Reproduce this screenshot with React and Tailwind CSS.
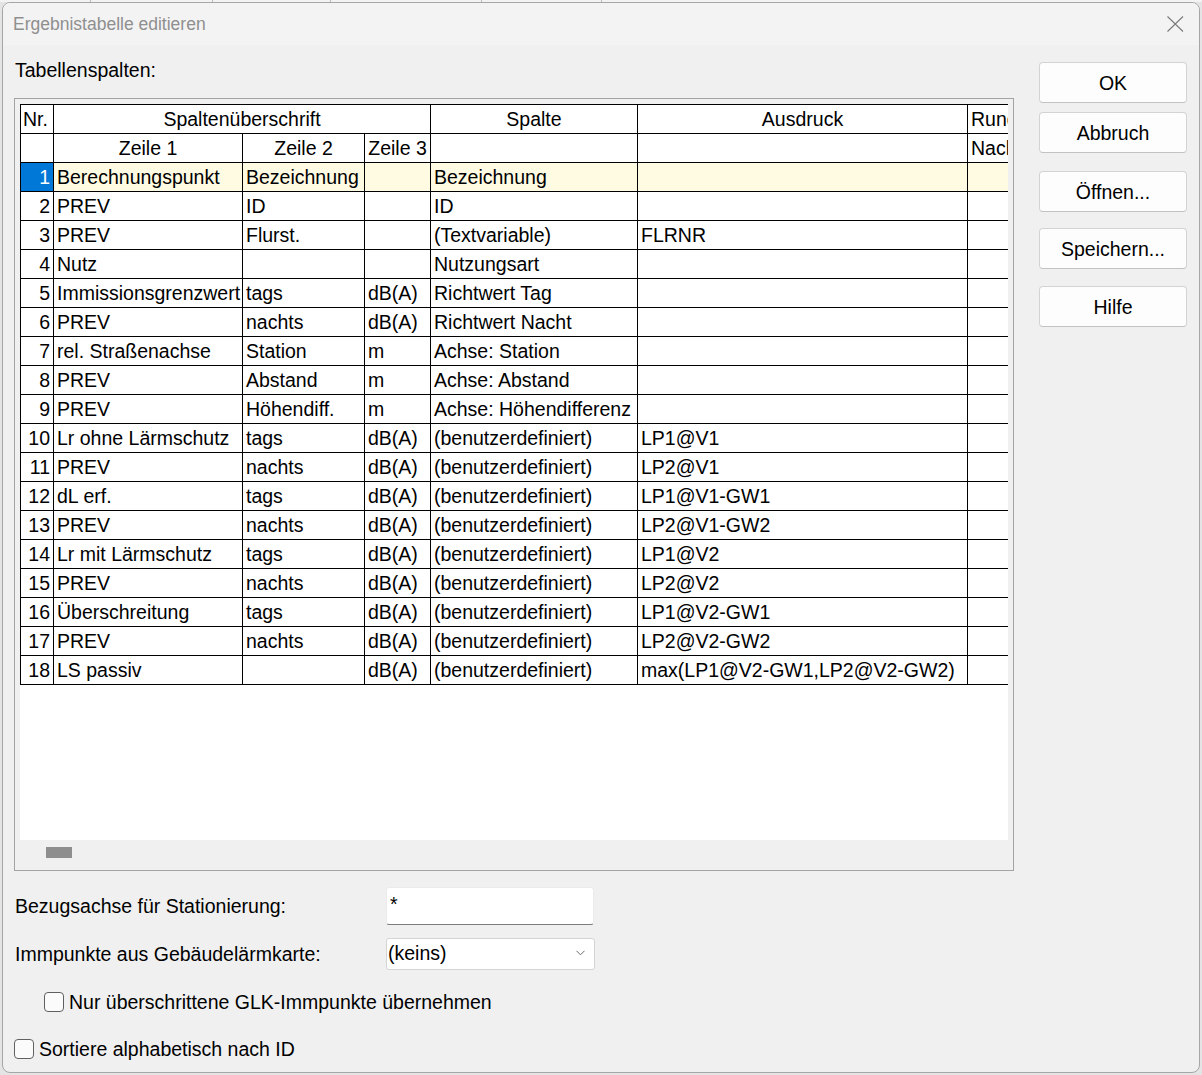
import React from "react";

// column widths incl. right grid line (first column also carries the left line)
const W = {
    nr: "w-[34px]",
    z1: "w-[189px]",
    z2: "w-[122px]",
    z3: "w-[66px]",
    head: "w-[377px]",
    spalte: "w-[207px]",
    ausdruck: "w-[330px]",
    rund: "w-[120px]",
};

const rows = [
    ["Berechnungspunkt", "Bezeichnung", "", "Bezeichnung", ""],
    ["PREV", "ID", "", "ID", ""],
    ["PREV", "Flurst.", "", "(Textvariable)", "FLRNR"],
    ["Nutz", "", "", "Nutzungsart", ""],
    ["Immissionsgrenzwert", "tags", "dB(A)", "Richtwert Tag", ""],
    ["PREV", "nachts", "dB(A)", "Richtwert Nacht", ""],
    ["rel. Straßenachse", "Station", "m", "Achse: Station", ""],
    ["PREV", "Abstand", "m", "Achse: Abstand", ""],
    ["PREV", "Höhendiff.", "m", "Achse: Höhendifferenz", ""],
    ["Lr ohne Lärmschutz", "tags", "dB(A)", "(benutzerdefiniert)", "LP1@V1"],
    ["PREV", "nachts", "dB(A)", "(benutzerdefiniert)", "LP2@V1"],
    ["dL erf.", "tags", "dB(A)", "(benutzerdefiniert)", "LP1@V1-GW1"],
    ["PREV", "nachts", "dB(A)", "(benutzerdefiniert)", "LP2@V1-GW2"],
    ["Lr mit Lärmschutz", "tags", "dB(A)", "(benutzerdefiniert)", "LP1@V2"],
    ["PREV", "nachts", "dB(A)", "(benutzerdefiniert)", "LP2@V2"],
    ["Überschreitung", "tags", "dB(A)", "(benutzerdefiniert)", "LP1@V2-GW1"],
    ["PREV", "nachts", "dB(A)", "(benutzerdefiniert)", "LP2@V2-GW2"],
    ["LS passiv", "", "dB(A)", "(benutzerdefiniert)", "max(LP1@V2-GW1,LP2@V2-GW2)"],
];

function Cell({ w, className = "", children }) {
    return (
        <div
            className={`${w} flex h-full shrink-0 items-center overflow-hidden whitespace-nowrap border-r border-b border-black px-[3px] ${className}`}
        >
            {children}
        </div>
    );
}

// long header in the last column: breaks inside the cell, only first line shows
function Clipped({ children }) {
    return <span className="block h-[22px] overflow-hidden whitespace-normal break-all">{children}</span>;
}

function Grid() {
    return (
        <div className="h-[736px] w-[988px] overflow-hidden bg-white">
            <div className="w-max">
                <div className="flex h-[30px] border-t border-black">
                    <Cell w={W.nr} className="border-l pl-[2px]">Nr.</Cell>
                    <Cell w={W.head} className="justify-center">Spaltenüberschrift</Cell>
                    <Cell w={W.spalte} className="justify-center">Spalte</Cell>
                    <Cell w={W.ausdruck} className="justify-center">Ausdruck</Cell>
                    <Cell w={W.rund}>Rundung</Cell>
                </div>
                <div className="flex h-[29px]">
                    <Cell w={W.nr} className="border-l" />
                    <Cell w={W.z1} className="justify-center">Zeile 1</Cell>
                    <Cell w={W.z2} className="justify-center">Zeile 2</Cell>
                    <Cell w={W.z3} className="justify-center">Zeile 3</Cell>
                    <Cell w={W.spalte} />
                    <Cell w={W.ausdruck} />
                    <Cell w={W.rund}><Clipped>Nachkommastellen</Clipped></Cell>
                </div>
                {rows.map((r, i) => {
                    const sel = i === 0;
                    const bg = sel ? "bg-[#fffbe3]" : "";
                    return (
                        <div key={i} className="flex h-[29px]">
                            <Cell
                                w={W.nr}
                                className={`justify-end border-l pr-[3px] ${sel ? "bg-[#0078d7] text-white" : ""}`}
                            >
                                {i + 1}
                            </Cell>
                            <Cell w={W.z1} className={bg}>{r[0]}</Cell>
                            <Cell w={W.z2} className={bg}>{r[1]}</Cell>
                            <Cell w={W.z3} className={bg}>{r[2]}</Cell>
                            <Cell w={W.spalte} className={bg}>{r[3]}</Cell>
                            <Cell w={W.ausdruck} className={bg}>{r[4]}</Cell>
                            <Cell w={W.rund} className={bg} />
                        </div>
                    );
                })}
            </div>
        </div>
    );
}

function Button({ children, className = "" }) {
    return (
        <button
            className={`flex h-[41px] w-[148px] items-center justify-center rounded-[4px] border border-[#d3d3d3] border-b-[#c2c2c2] bg-[#fdfdfd] text-black ${className}`}
        >
            {children}
        </button>
    );
}

function Checkbox() {
    return <span className="h-[20px] w-[20px] shrink-0 rounded-[4px] border border-[#606060] bg-[#fbfbfb]" />;
}

export default function App() {
    return (
        <div className="h-[1075px] w-[1202px] overflow-hidden bg-[#e4e4e4] font-['Liberation_Sans',Arial,sans-serif] text-[19.5px] leading-[22px] text-black">
            {/* menu bar of the window behind the dialog */}
            <div className="flex h-[2px] bg-[#f3f3f3]">
                <span className="w-[91px] border-r border-[#bbb]" />
                <span className="w-[122px] border-r border-[#bbb]" />
                <span className="w-[118px] border-r border-[#bbb]" />
                <span className="w-[151px] border-r border-[#bbb]" />
                <span className="w-[120px] border-r border-[#bbb]" />
            </div>

            <div className="ml-[2px] flex h-[1071px] w-[1198px] flex-col overflow-hidden rounded-[8px] border border-[#a6a6a6] bg-[#f0f0f0]">
                <div className="flex h-[42px] shrink-0 items-center justify-between bg-[#f3f3f3] pl-[10px] pr-[15px]">
                    <span className="text-[17.5px] text-[#8f8f8f]">Ergebnistabelle editieren</span>
                    <svg width="17" height="16" viewBox="0 0 17 16" fill="none" stroke="#7a7a7a" strokeWidth="1.1">
                        <path d="M0.5 0.5L16 15.5M16 0.5L0.5 15.5" />
                    </svg>
                </div>

                <div className="flex flex-1 pt-[14px]">
                    <div className="ml-[11px] w-[1000px] shrink-0">
                        <div className="pl-[1px]">Tabellenspalten:</div>

                        <div className="mt-[17px] h-[773px] w-[1000px] border border-[#a3a3a3] pl-[5px] pt-[5px]">
                            <Grid />
                            <div className="ml-[26px] mt-[7px] h-[11px] w-[26px] bg-[#8e8e8e]" />
                        </div>

                        <div className="mt-[16px] flex items-center">
                            <span className="w-[372px] pl-[1px]">Bezugsachse für Stationierung:</span>
                            <div className="h-[38px] w-[208px] rounded-[3px] border border-[#ebebeb] border-b-[#7d7d7d] bg-white pl-[3px] pt-[5px]">
                                *
                            </div>
                        </div>

                        <div className="mt-[13px] flex items-center">
                            <span className="w-[372px] pl-[1px]">Immpunkte aus Gebäudelärmkarte:</span>
                            <div className="flex h-[32px] w-[209px] items-center justify-between rounded-[3px] border border-[#d4d4d4] bg-white pb-[2px] pl-[1px] pr-[9px]">
                                <span>(keins)</span>
                                <svg width="9" height="6" viewBox="0 0 9 6" fill="none" stroke="#6b6b6b" strokeWidth="1">
                                    <path d="M0.5 0.8L4.5 4.8L8.5 0.8" />
                                </svg>
                            </div>
                        </div>

                        <label className="ml-[30px] mt-[21px] flex h-[22px] items-center gap-[5px]">
                            <Checkbox />
                            <span>Nur überschrittene GLK-Immpunkte übernehmen</span>
                        </label>

                        <label className="mt-[25px] flex h-[22px] items-center gap-[5px]">
                            <Checkbox />
                            <span>Sortiere alphabetisch nach ID</span>
                        </label>
                    </div>

                    <div className="ml-[25px] flex flex-col">
                        <Button className="mt-[3px]">OK</Button>
                        <Button className="mt-[9px]">Abbruch</Button>
                        <Button className="mt-[18px]">Öffnen...</Button>
                        <Button className="mt-[16px]">Speichern...</Button>
                        <Button className="mt-[17px]">Hilfe</Button>
                    </div>
                </div>
            </div>
        </div>
    );
}
